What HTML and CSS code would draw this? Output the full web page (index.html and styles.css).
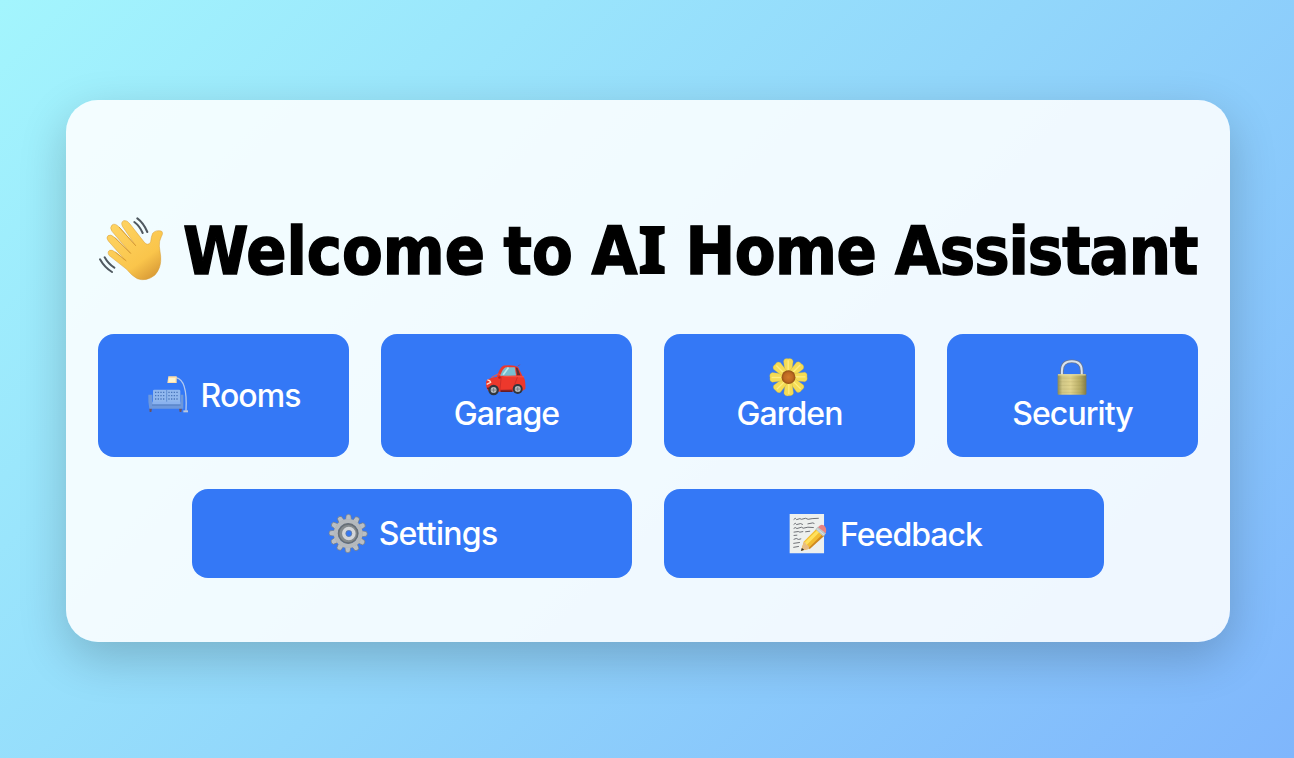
FILE: index.html
```html
<!DOCTYPE html>
<html lang="en">
<head>
<meta charset="utf-8">
<title>AI Home Assistant</title>
<link rel="stylesheet" href="styles.css">
</head>
<body>
<main class="card">
  <h1 class="title">
    <svg class="wave" viewBox="24 36 198 195" aria-hidden="true">
      <defs><linearGradient id="skin" x1="0" y1="0" x2=".7" y2="1"><stop offset="0" stop-color="#ffd666"/><stop offset=".75" stop-color="#fac54b"/><stop offset="1" stop-color="#dda039"/></linearGradient></defs>
      <path d="M110 193L57 151Q51 140 59 136Q66 133 75 141L106 166L55 108Q47 98 54 92Q62 86 73 97L121 144L66 79Q58 68 66 60Q75 53 87 66L136 121L98 65Q91 52 101 47Q111 44 120 57L163 112Q174 124 182 111Q183 96 188 85Q197 74 214 78Q221 83 214 95Q207 108 208 124L212 154Q215 187 195 210Q169 231 142 221Q127 214 110 193Z" fill="url(#skin)" stroke="#d79a32" stroke-width="1.5"/>
      <path d="M77 142l31 25M75 98l47 47M88 67l49 55" fill="none" stroke="#d99c32" stroke-width="3" stroke-linecap="round"/>
      <path d="M142 40Q161 54 172 81M133 51Q149 63 158 84M30 163Q44 188 66 201M44 157Q55 177 73 188" fill="none" stroke="#505960" stroke-width="6" stroke-linecap="round"/>
    </svg>
    <span class="words">Welcome to A<span class="slab">I</span> <span class="snug">Home</span> <span class="tight">Assistant</span></span>
  </h1>
  <div class="row">
    <button class="tile tile-inline rooms">
      <svg class="icon" viewBox="24 28 123 123" aria-hidden="true">
        <path d="M108 36Q143 42 138 135" fill="none" stroke="#b4caef" stroke-width="4"/><path d="M130 134h14v6h-14z" fill="#bdc8dc"/>
        <path d="M85 32h25v20H82z" fill="#ffdfaa"/><path d="M87 37h19v12H86z" fill="#fff5cf"/>
        <path d="M28 128h8l-2 11h-5zM117 128h9l-2 11h-5z" fill="#6c5362"/>
        <rect x="39" y="72" width="82" height="45" rx="4" fill="#91b8ee"/><path d="M80 73v38" stroke="#487bc9" stroke-width="2"/>
        <path d="M45 80h31M85 80h31M45 90h31M85 90h31M45 100h31M85 100h31" stroke="#4a76bb" stroke-width="4" stroke-dasharray="4 4"/>
        <path d="M25 87h12v24h85V87h8v42H28q-4-18-3-42z" fill="#6d98dc"/><path d="M37 108h84v8H37z" fill="#8ab2ef"/><path d="M36 118h86" stroke="#456fb6" stroke-width="2"/>
      </svg><span>Rooms</span>
    </button>
    <button class="tile tile-stack">
      <svg class="icon" viewBox="32 22 124 124" aria-hidden="true">
        <path d="M32 98Q32 87 65 82Q73 53 86 48Q116 45 129 52L143 81Q153 88 151 119L139 126L45 127Q31 124 32 98Z" fill="#ed382c"/><path d="M48 84L69 73L90 81L147 82" fill="none" stroke="#f65346" stroke-width="3"/>
        <path d="M75 79Q82 56 92 53L119 53L123 78Z" fill="#78bed0"/><path d="M84 76L100 54" stroke="#bce8ec" stroke-width="5"/><path d="M122 53l6 3 8 21h-10z" fill="#5d3033"/>
        <path d="M36 92q8-1 10 7l-12 6" stroke="#ffe0d1" stroke-width="4" fill="none"/><path d="M78 83l-4 39 39-2 14-37M129 50l5-5" stroke="#b92927" stroke-width="2" fill="none"/><path d="M36 116l8 3M76 125h36" stroke="#671c25" stroke-width="5"/>
        <circle cx="55" cy="122" r="16" fill="#30363d"/><circle cx="55" cy="122" r="9" fill="#b7bdc1"/><circle cx="128" cy="119" r="15" fill="#30363d"/><circle cx="128" cy="119" r="9" fill="#b7bdc1"/><path d="M48 122h14M55 115v14M121 119h14M128 112v14" stroke="#646b72" stroke-width="2"/><circle cx="73" cy="84" r="4" fill="#bf201d"/>
      </svg><span>Garage</span>
    </button>
    <button class="tile tile-stack">
      <svg class="icon" viewBox="33 20 124 124" aria-hidden="true">
        <defs><radialGradient id="pollen"><stop stop-color="#d27a2a"/><stop offset=".65" stop-color="#be6922"/><stop offset="1" stop-color="#915014"/></radialGradient><g id="petal"><path d="M82 71L77 32Q79 23 91 25Q103 22 106 32L101 71Z" fill="#f5dc55" stroke="#c9ad3b"/><path d="M91 30v32" stroke="#ffed80" stroke-width="4"/></g></defs>
        <use href="#petal"/><use href="#petal" transform="rotate(45 92 81)"/><use href="#petal" transform="rotate(90 92 81)"/><use href="#petal" transform="rotate(135 92 81)"/><use href="#petal" transform="rotate(180 92 81)"/><use href="#petal" transform="rotate(225 92 81)"/><use href="#petal" transform="rotate(270 92 81)"/><use href="#petal" transform="rotate(315 92 81)"/><circle cx="92" cy="81" r="21" fill="url(#pollen)"/>
      </svg><span>Garden</span>
    </button>
    <button class="tile tile-stack">
      <svg class="icon" viewBox="29 21 124 124" aria-hidden="true">
        <defs><linearGradient id="brass"><stop stop-color="#8b8954"/><stop offset=".16" stop-color="#d0c686"/><stop offset=".45" stop-color="#e1d48e"/><stop offset=".8" stop-color="#b4a961"/><stop offset="1" stop-color="#817a47"/></linearGradient></defs>
        <path d="M59 80V63Q59 34 89 34Q119 34 119 63V80" fill="none" stroke="#687794" stroke-width="11"/><path d="M59 80V63Q59 34 89 34Q119 34 119 63V80" fill="none" stroke="#d9e3ee" stroke-width="6"/>
        <rect x="46" y="73" width="87" height="62" rx="3" fill="url(#brass)"/><path d="M47 75h84" stroke="#eee4a4" stroke-width="3"/><path d="M49 85h82M49 96h82M49 107h82M49 118h82M49 128h82" stroke="#8f874b" opacity=".45"/>
      </svg><span>Security</span>
    </button>
  </div>
  <div class="row row-wide">
    <button class="tile tile-inline settings">
      <svg class="icon" viewBox="24 27 124 124" aria-hidden="true">
        <defs><g id="tooth"><path d="M80 48L82 34Q89 28 96 34L98 48Z" fill="#b9bec4" stroke="#737a82" stroke-width="2"/></g></defs>
        <use href="#tooth"/><use href="#tooth" transform="rotate(30 88 89)"/><use href="#tooth" transform="rotate(60 88 89)"/><use href="#tooth" transform="rotate(90 88 89)"/><use href="#tooth" transform="rotate(120 88 89)"/><use href="#tooth" transform="rotate(150 88 89)"/><use href="#tooth" transform="rotate(180 88 89)"/><use href="#tooth" transform="rotate(210 88 89)"/><use href="#tooth" transform="rotate(240 88 89)"/><use href="#tooth" transform="rotate(270 88 89)"/><use href="#tooth" transform="rotate(300 88 89)"/><use href="#tooth" transform="rotate(330 88 89)"/>
        <circle cx="88" cy="89" r="37" fill="none" stroke="#b5b9bd" stroke-width="13"/><circle cx="88" cy="89" r="29" fill="#858b8f" stroke="#686f75" stroke-width="5"/><circle cx="90" cy="89" r="15" fill="#3478f6" stroke="#d3d5d8" stroke-width="11"/><circle cx="90" cy="89" r="9" fill="none" stroke="#757c86" stroke-width="2"/>
      </svg><span>Settings</span>
    </button>
    <button class="tile tile-inline feedback">
      <svg class="icon" viewBox="26 31 124 124" aria-hidden="true">
        <path d="M31 34h104v119H31z" fill="#edf0ee"/>
        <path d="M43 51l5-4 4 4 10-3 5 2 12-3 8 3 12-2 20-1M43 66l5-4 4 4 12-3 7 3M85 64l16-3 5 2M43 78l5-3 5 3 14-4 5 3 14-3 18 1M43 89l14-2 5 2 10-2M78 88l15-2M43 99l11-1M43 111l8-3 7 3 8-2M42 123l20-3M42 135l17-3" stroke="#55575d" stroke-width="2.5" fill="none"/>
        <path d="M65 145L74 117L116 75L137 95L91 139Z" fill="#f3bd30"/><path d="M75 121L119 78L126 84L81 129Z" fill="#ffe15c"/><path d="M88 137L132 94L137 99L91 141Z" fill="#cf8920"/><path d="M65 146L74 119Q80 119 80 126Q88 126 91 139Z" fill="#e8bd83"/><path d="M65 146l3-9 7 5z" fill="#333"/>
        <path d="M109 80l8-8 24 21-9 8z" fill="#bdc9cb"/><path d="M117 74Q124 63 134 68Q145 76 140 92Z" fill="#e78383"/><path d="M113 78l23 20" stroke="#f3f3e8" stroke-width="2"/>
      </svg><span>Feedback</span>
    </button>
  </div>
</main>
</body>
</html>
```
FILE: styles.css
```css
* { box-sizing: border-box; }
body { margin: 0; height: 758px; padding: 100px 64px 0 66px; overflow: hidden; background: linear-gradient(135deg, #a3f5fd 0%, #92d7fb 50%, #7fb6fc 100%); font-family: Inter, "Liberation Sans", sans-serif; }
.card { height: 542px; padding: 111px 32px 0; border-radius: 32px; background: rgba(255,255,255,.87); box-shadow: 0 16px 48px rgba(0,0,0,.2); }
.title { display: flex; align-items: center; height: 76px; margin: 0 0 47px; color: #000; font: bold 66px/76px "DejaVu Sans Condensed", "DejaVu Sans", sans-serif; font-stretch: condensed; white-space: nowrap; }
.wave { flex: none; width: 66px; height: 65px; margin-right: 19px; }
.words { margin-top: 6px; letter-spacing: 0; word-spacing: -2px; -webkit-text-stroke: 1.4px #000; }
.slab { font: 900 67px/1 "Noto Sans", sans-serif; -webkit-text-stroke: 0; }
.snug { letter-spacing: -.5px; }
.tight { letter-spacing: -1px; }
.row { display: flex; justify-content: center; gap: 32px; }
.row-wide { margin-top: 32px; }
.tile { flex: none; width: 251px; height: 123px; padding: 0; border: 0; border-radius: 16px; background: #3478f6; color: #fff; display: flex; font: 500 32px/36px Inter, sans-serif; letter-spacing: -.95px; }
.row-wide .tile { width: 440px; height: 89px; }
.icon { width: 41px; height: 41px; flex: none; }
.tile-inline { align-items: center; justify-content: center; gap: 11px; }
.rooms { gap: 12px; padding-left: 1px; }
.tile-stack { flex-direction: column; align-items: center; padding-top: 23px; }
.tile-stack span { margin-top: -2px; }
.settings { letter-spacing: -.75px; }
.feedback { padding-left: 2px; }
.feedback span { padding-top: 2px; }
```
